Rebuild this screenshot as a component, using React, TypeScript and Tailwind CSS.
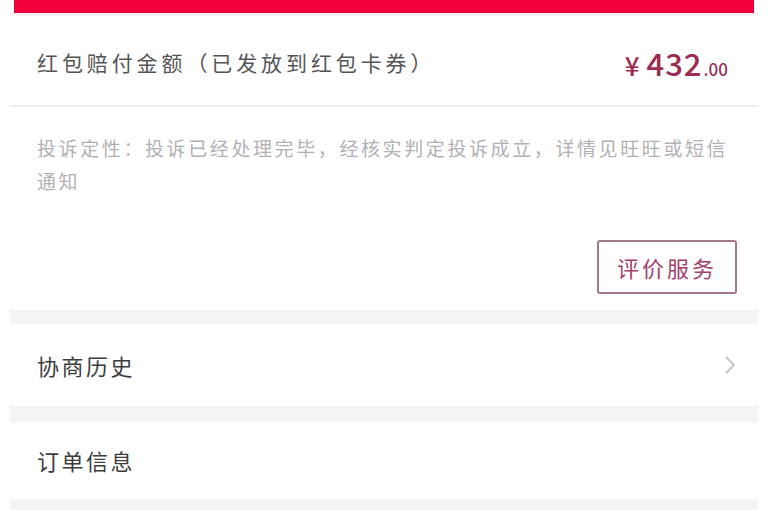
import React from "react";

const font = { fontFamily: '"Noto Sans CJK SC", "Noto Sans", sans-serif' };

export default function App() {
  return (
    <div
      className="w-[768px] h-[510px] overflow-hidden bg-white px-[10px]"
      style={font}
    >
      <div className="flex flex-col h-full">
        <div className="mx-[4px] h-[13px] bg-[#f2003a] shrink-0" />
        <div className="h-[3px] bg-[#fdf2f4] shrink-0" />
        <div className="flex items-center justify-between h-[89px] pl-[27px] pr-[30px] pt-[4px] shrink-0">
          <span className="text-[21px] tracking-[3.9px] text-[#555555] leading-none">
            红包赔付金额（已发放到红包卡券）
          </span>
          <span className="flex items-baseline text-[#9c2a52] leading-none font-medium">
            <span className="text-[26px] mr-[7px]">¥</span>
            <span className="text-[31px] tracking-[1px]">432</span>
            <span className="text-[17px] ml-[1px]">.00</span>
          </span>
        </div>
        <div className="h-[2px] bg-[#eeedf0] shrink-0" />
        <div className="flex flex-col pl-[27px] pr-[21px] pt-[24px] pb-[16px] shrink-0">
          <p className="w-[700px] text-[19px] leading-[33px] tracking-[2.6px] text-[#b3b0b5]">
            投诉定性：投诉已经处理完毕，经核实判定投诉成立，详情见旺旺或短信通知
          </p>
          <div className="flex justify-end mt-[43px]">
            <div className="flex items-center justify-center w-[140px] h-[54px] border-2 border-[#a2788a] rounded-[3px] text-[22px] tracking-[3px] text-[#a3406a]">
              评价服务
            </div>
          </div>
        </div>
        <div className="h-[14px] bg-[#f4f3f5] shrink-0" />
        <div className="flex items-center justify-between h-[82px] pl-[27px] pr-[22px] shrink-0">
          <span className="text-[22px] tracking-[2.5px] text-[#3d3d3d]">协商历史</span>
          <svg width="12" height="20" viewBox="0 0 12 20" fill="none">
            <path d="M2 2 L10 10 L2 18" stroke="#c4c2c6" strokeWidth="1.8" />
          </svg>
        </div>
        <div className="h-[16px] bg-[#f4f3f5] shrink-0" />
        <div className="flex items-center h-[77px] pl-[27px] shrink-0">
          <span className="text-[22px] tracking-[2.5px] text-[#3d3d3d]">订单信息</span>
        </div>
        <div className="flex-1 bg-[#f4f3f5]" />
      </div>
    </div>
  );
}
